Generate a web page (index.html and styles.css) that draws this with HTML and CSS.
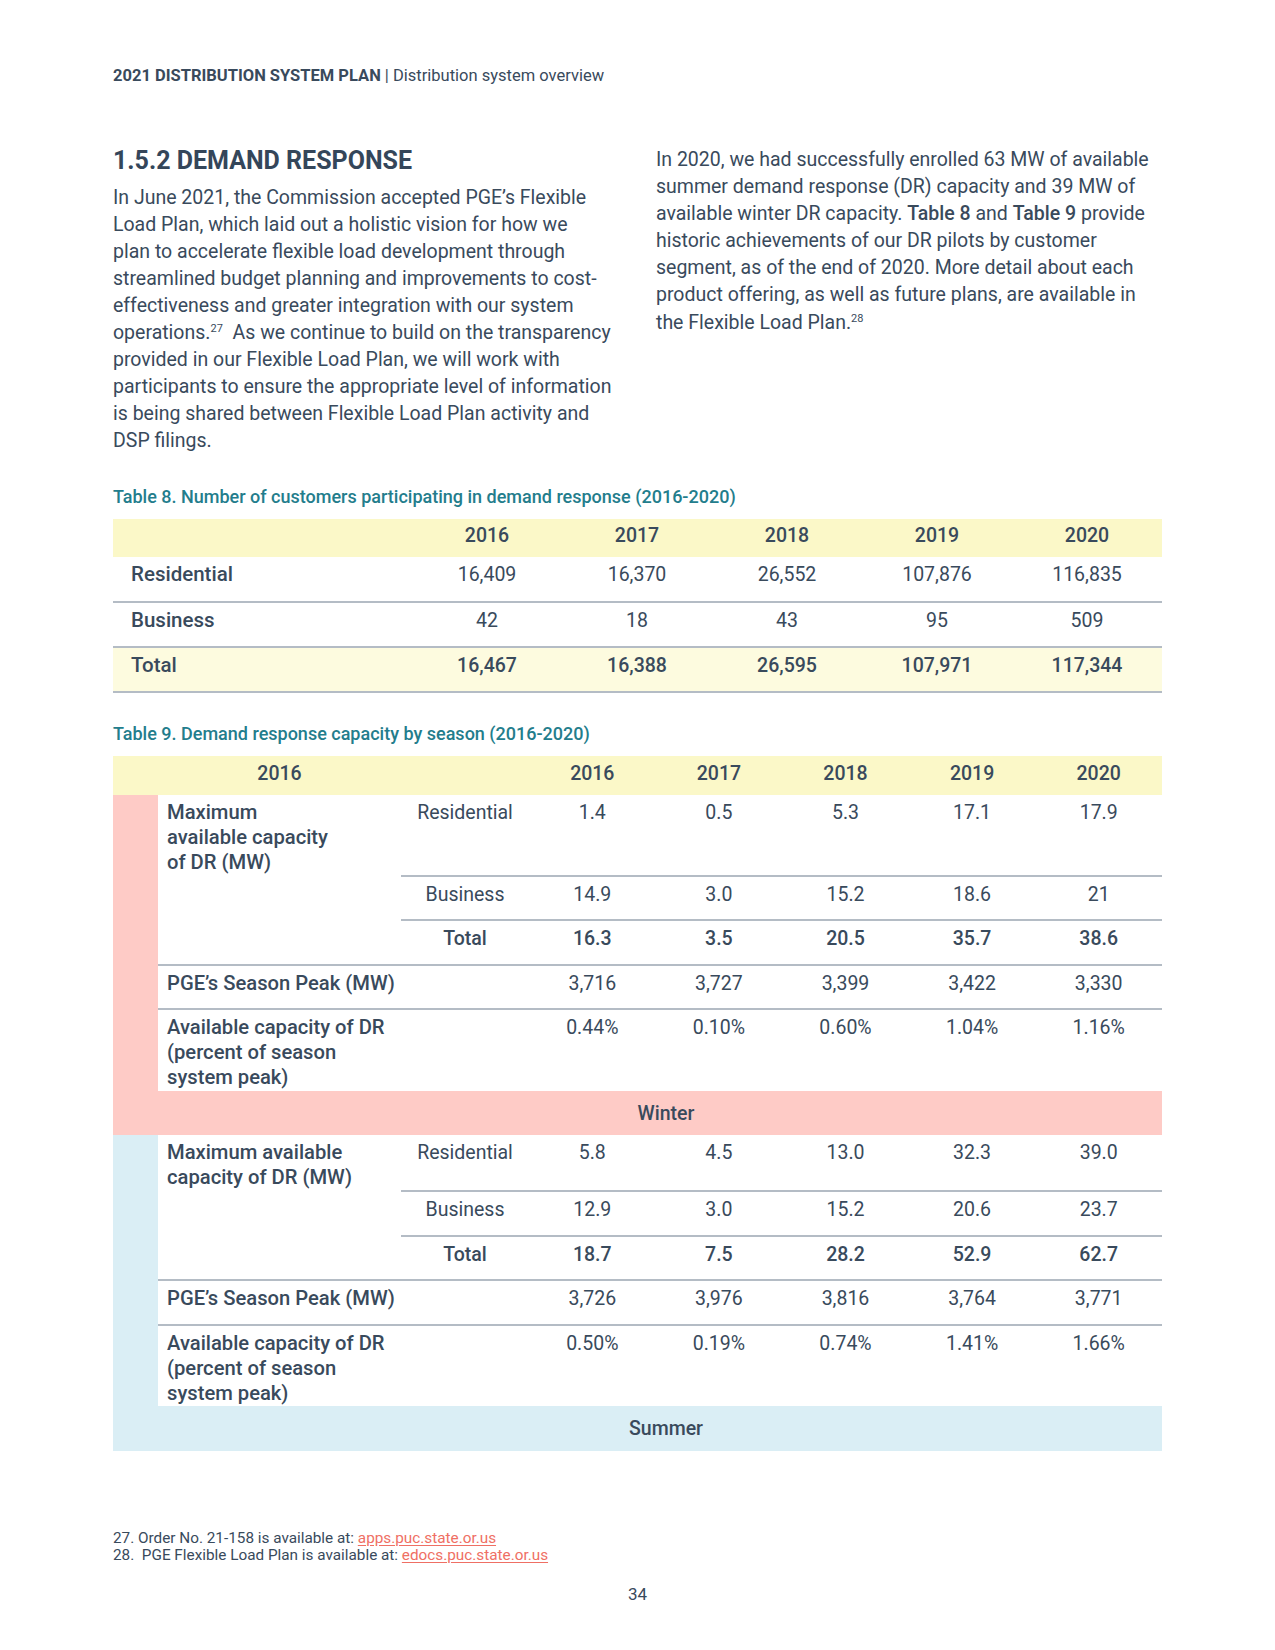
FILE: index.html
```html
<!DOCTYPE html>
<html lang="en">
<head>
<meta charset="utf-8">
<title>2021 Distribution System Plan – Demand Response</title>
<link rel="stylesheet" href="styles.css">
</head>
<body>
<div class="page">
  <header class="running"><b>2021 DISTRIBUTION SYSTEM PLAN</b> | Distribution system overview</header>

  <section class="intro">
    <div class="col">
      <h2>1.5.2 DEMAND RESPONSE</h2>
      <p>In June 2021, the Commission accepted PGE’s Flexible<br>Load Plan, which laid out a holistic vision for how we<br>plan to accelerate flexible load development through<br>streamlined budget planning and improvements to cost-<br>effectiveness and greater integration with our system<br>operations.<sup>27</sup>&nbsp; As we continue to build on the transparency<br>provided in our Flexible Load Plan, we will work with<br>participants to ensure the appropriate level of information<br>is being shared between Flexible Load Plan activity and<br>DSP filings.</p>
    </div>
    <div class="col col-right">
      <p>In 2020, we had successfully enrolled 63 MW of available<br>summer demand response (DR) capacity and 39 MW of<br>available winter DR capacity. <b>Table 8</b> and <b>Table 9</b> provide<br>historic achievements of our DR pilots by customer<br>segment, as of the end of 2020. More detail about each<br>product offering, as well as future plans, are available in<br>the Flexible Load Plan.<sup>28</sup></p>
    </div>
  </section>

  <p class="caption cap8">Table 8. Number of customers participating in demand response (2016-2020)</p>
  <table class="t8">
    <colgroup><col class="c-lbl"><col class="c-yr"><col class="c-yr"><col class="c-yr"><col class="c-yr"><col class="c-yr"></colgroup>
    <thead>
      <tr><th></th><th>2016</th><th>2017</th><th>2018</th><th>2019</th><th>2020</th></tr>
    </thead>
    <tbody>
      <tr><td class="lbl">Residential</td><td>16,409</td><td>16,370</td><td>26,552</td><td>107,876</td><td>116,835</td></tr>
      <tr><td class="lbl">Business</td><td>42</td><td>18</td><td>43</td><td>95</td><td>509</td></tr>
      <tr class="total"><td class="lbl">Total</td><td>16,467</td><td>16,388</td><td>26,595</td><td>107,971</td><td>117,344</td></tr>
    </tbody>
  </table>

  <p class="caption cap9">Table 9. Demand response capacity by season (2016-2020)</p>
  <table class="t9">
    <colgroup><col class="c-strip"><col class="c-lbl"><col class="c-sub"><col class="c-yr"><col class="c-yr"><col class="c-yr"><col class="c-yr"><col class="c-yr"></colgroup>
    <thead>
      <tr><th></th><th>2016</th><th></th><th>2016</th><th>2017</th><th>2018</th><th>2019</th><th>2020</th></tr>
    </thead>
    <tbody class="winter">
      <tr class="r-res3">
        <td class="strip" rowspan="6"></td>
        <td class="lbl" rowspan="3">Maximum<br>available capacity<br>of DR (MW)</td>
        <td class="sub">Residential</td><td>1.4</td><td>0.5</td><td>5.3</td><td>17.1</td><td>17.9</td>
      </tr>
      <tr class="rule"><td class="sub">Business</td><td>14.9</td><td>3.0</td><td>15.2</td><td>18.6</td><td>21</td></tr>
      <tr class="rule bold"><td class="sub">Total</td><td>16.3</td><td>3.5</td><td>20.5</td><td>35.7</td><td>38.6</td></tr>
      <tr class="rule"><td class="lbl" colspan="2">PGE’s Season Peak (MW)</td><td>3,716</td><td>3,727</td><td>3,399</td><td>3,422</td><td>3,330</td></tr>
      <tr class="rule r-pct"><td class="lbl" colspan="2">Available capacity of DR<br>(percent of season<br>system peak)</td><td>0.44%</td><td>0.10%</td><td>0.60%</td><td>1.04%</td><td>1.16%</td></tr>
      <tr class="season"><td colspan="7">Winter</td></tr>
    </tbody>
    <tbody class="summer">
      <tr class="r-res2">
        <td class="strip" rowspan="6"></td>
        <td class="lbl" rowspan="3">Maximum available<br>capacity of DR (MW)</td>
        <td class="sub">Residential</td><td>5.8</td><td>4.5</td><td>13.0</td><td>32.3</td><td>39.0</td>
      </tr>
      <tr class="rule"><td class="sub">Business</td><td>12.9</td><td>3.0</td><td>15.2</td><td>20.6</td><td>23.7</td></tr>
      <tr class="rule bold"><td class="sub">Total</td><td>18.7</td><td>7.5</td><td>28.2</td><td>52.9</td><td>62.7</td></tr>
      <tr class="rule"><td class="lbl" colspan="2">PGE’s Season Peak (MW)</td><td>3,726</td><td>3,976</td><td>3,816</td><td>3,764</td><td>3,771</td></tr>
      <tr class="rule r-pct"><td class="lbl" colspan="2">Available capacity of DR<br>(percent of season<br>system peak)</td><td>0.50%</td><td>0.19%</td><td>0.74%</td><td>1.41%</td><td>1.66%</td></tr>
      <tr class="season"><td colspan="7">Summer</td></tr>
    </tbody>
  </table>

  <footer class="notes">
    <p>27. Order No. 21-158 is available at: <a href="#">apps.puc.state.or.us</a></p>
    <p>28.&nbsp; PGE Flexible Load Plan is available at: <a href="#">edocs.puc.state.or.us</a></p>
  </footer>
  <div class="pageno">34</div>
</div>
</body>
</html>
```

FILE: styles.css
```css
body {
  margin: 0;
  background: #ffffff;
  font-family: Roboto, "Liberation Sans", Arial, sans-serif;
  color: #394a5c;
}

.page {
  width: 1049px;
  padding: 66px 0 40px 113px;
}

.running {
  font-size: 16.5px;
  line-height: 20px;
  margin: 0 0 58px;
}
.running b { font-weight: 700; }

.intro {
  display: grid;
  grid-template-columns: 506px 506px;
  column-gap: 37px;
}
.col-right { padding-top: 2px; }

.intro h2 {
  font-size: 25px;
  line-height: 30px;
  font-weight: 700;
  margin: 2px 0 7.5px;
  color: #34465a;
}

.intro p {
  font-size: 19.5px;
  line-height: 27.1px;
  margin: 0;
  white-space: nowrap;
}
.intro p b { font-weight: 500; }
.intro sup {
  font-size: 11px;
  line-height: 0;
  vertical-align: 7px;
}

.caption {
  margin: 0;
  font-size: 18px;
  line-height: 20px;
  font-weight: 500;
  color: #237d8c;
}
.cap8 { margin-top: 32.5px; margin-bottom: 12px; }
.cap9 { margin-top: 31px; margin-bottom: 12px; }

table {
  width: 1049px;
  border-collapse: collapse;
  table-layout: fixed;
}
th, td {
  font-size: 19.5px;
  line-height: 25px;
  padding: 5px 0 0;
  vertical-align: top;
  text-align: center;
  font-weight: 400;
}
th { font-weight: 500; }

/* Table 8 */
.t8 .c-lbl { width: 299px; }
.t8 .c-yr { width: 150px; }
.t8 thead tr { background: #fbf8c8; height: 38px; }
.t8 thead th { padding-top: 4px; }
.t8 tbody tr { height: 45px; }
.t8 tbody tr + tr td { border-top: 2px solid #b4bcc5; }
.t8 .lbl { text-align: left; padding-left: 18px; font-weight: 500; font-size: 20.5px; }
.t8 .total { background: #fdfbdf; }
.t8 .total td { font-weight: 500; border-bottom: 2px solid #b4bcc5; }

/* Table 9 */
.t9 .c-strip { width: 45px; }
.t9 .c-lbl { width: 243px; }
.t9 .c-sub { width: 128px; }
.t9 .c-yr { width: 126.6px; }
.t9 thead tr { background: #fbf8c8; height: 39px; }
.t9 thead th { padding-top: 5px; }
.t9 tbody tr { height: 45px; }
.t9 .rule { height: 44.5px; }
.t9 .r-res3 { height: 81px; }
.t9 .r-res2 { height: 56px; }
.t9 .r-pct { height: 81.5px; }
.t9 .rule td { border-top: 2px solid #b4bcc5; }
.t9 .lbl { text-align: left; padding-left: 9px; font-weight: 500; font-size: 20.2px; }
.t9 .bold td { font-weight: 500; }
.t9 .winter .strip { background: #fecbc6; }
.t9 .summer .strip { background: #daeef5; }
.t9 .season td {
  vertical-align: middle;
  padding: 0 0 0 12px;
  font-weight: 500;
}
.t9 .winter .season { background: #fecbc6; height: 44.5px; }
.t9 .summer .season { background: #daeef5; height: 45px; }

/* Footnotes */
.notes {
  margin-top: 79px;
  font-size: 15.3px;
  line-height: 17px;
}
.notes p { margin: 0; }
.notes a { color: #ef6f64; text-decoration: underline; text-underline-offset: 2px; }

.pageno {
  margin-top: 20px;
  text-align: center;
  font-size: 17px;
  line-height: 20px;
}
```
